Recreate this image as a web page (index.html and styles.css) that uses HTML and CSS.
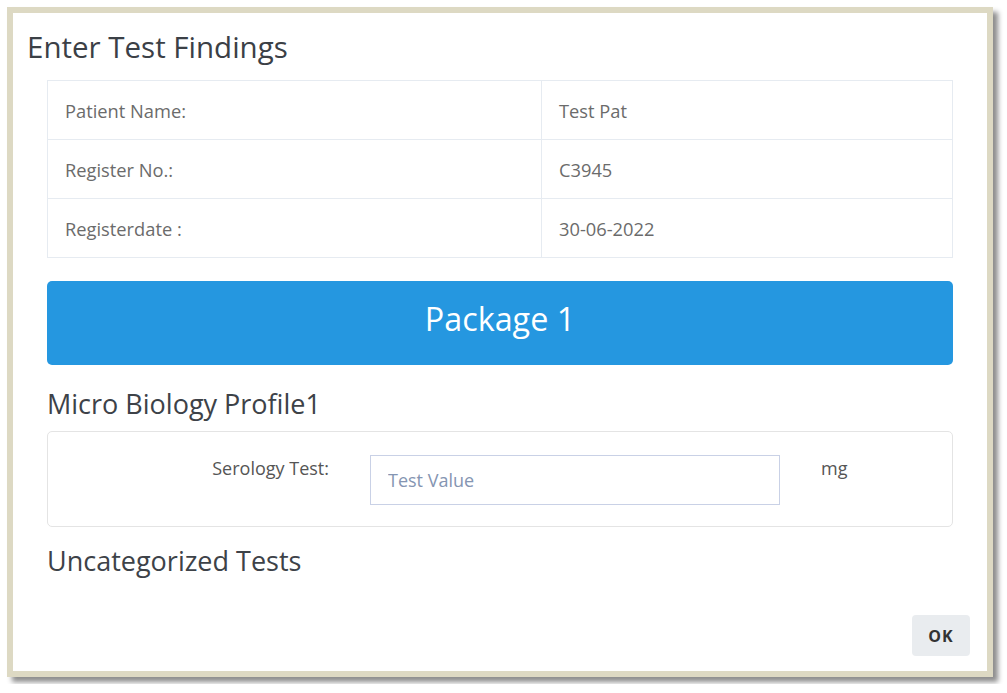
FILE: index.html
```html
<!DOCTYPE html>
<html lang="en">
<head>
  <meta charset="UTF-8">
  <meta name="viewport" content="width=device-width, initial-scale=1.0">
  <title>Enter Test Findings</title>
  <link rel="stylesheet" href="styles.css">
</head>

<body>
  <div class="modal">
    <h2 class="modal-title">Enter Test Findings</h2>

    <div class="modal-body">
      <table class="patient">
        <colgroup>
          <col class="col-key">
          <col>
        </colgroup>
        <tbody>
          <tr>
            <td>Patient Name:</td>
            <td>Test Pat</td>
          </tr>
          <tr>
            <td>Register No.:</td>
            <td>C3945</td>
          </tr>
          <tr>
            <td>Registerdate :</td>
            <td>30-06-2022</td>
          </tr>
        </tbody>
      </table>

      <div class="package">Package 1</div>

      <h3 class="section">Micro Biology Profile1</h3>
      <div class="card">
        <div class="test-row">
          <label class="test-label" for="serology">Serology Test:</label>
          <input class="test-input" id="serology" type="text" placeholder="Test Value">
          <span class="test-unit">mg</span>
        </div>
      </div>

      <h3 class="section section-last">Uncategorized Tests</h3>
    </div>

    <div class="modal-footer">
      <button class="btn-ok">OK</button>
    </div>
  </div>
</body>
</html>
```

FILE: styles.css
```css
body {
  margin: 0;
  padding: 0;
  background: #fff;
  font-family: "Open Sans", "Noto Sans", sans-serif;
  color: #444;
}
.modal {
  box-sizing: border-box;
  width: 986px;
  height: 670px;
  margin: 7px;
  border: 6px solid #ddd9c3;
  background: #fff;
  box-shadow: 5px 5px 5px rgba(0, 0, 0, 0.45);
  display: flex;
  flex-direction: column;
}
.modal-title {
  margin: 16px 0 0 14px;
  font-size: 29.5px;
  line-height: 36px;
  font-weight: 400;
  color: #3b4046;
}
.modal-body {
  padding: 0 34px;
  flex: 1;
}
/* patient info */
.patient {
  width: 100%;
  margin-top: 15px;
  border-collapse: collapse;
  table-layout: fixed;
}
.col-key {
  width: 494px;
}
.patient td {
  height: 59px;
  box-sizing: border-box;
  padding: 0 17px;
  border: 1px solid #e6ebf1;
  font-size: 18.3px;
  color: #6b6b6b;
}
.package {
  margin-top: 23px;
  height: 84px;
  box-sizing: border-box;
  padding-bottom: 10px;
  border-radius: 5px;
  background: #2597e0;
  color: #fff;
  font-size: 32.3px;
  line-height: 74px;
  text-align: center;
}
.section {
  margin: 23px 0 0;
  font-size: 27px;
  line-height: 32px;
  font-weight: 400;
  color: #3d4248;
}
.card {
  margin-top: 11px;
  border: 1px solid #e4e4e4;
  border-radius: 5px;
  padding: 23px 0 21px;
}
.test-row {
  display: grid;
  grid-template-columns: 281px 410px auto;
  column-gap: 41px;
  align-items: start;
}
.test-label {
  text-align: right;
  font-size: 18px;
  line-height: 24px;
  padding-top: 1px;
  color: #555;
}
.test-input {
  box-sizing: border-box;
  height: 50px;
  padding: 0 17px;
  border: 1px solid #c9d1e6;
  border-radius: 0;
  font-family: inherit;
  font-size: 18px;
  color: #333;
  outline: none;
}
.test-input::placeholder {
  color: #8595b2;
}
.test-unit {
  font-size: 18px;
  line-height: 24px;
  padding-top: 1px;
  color: #555;
}
.section-last {
  margin-top: 18px;
}
.modal-footer {
  display: flex;
  justify-content: flex-end;
  padding: 0 17px 15px;
}
.btn-ok {
  width: 58px;
  height: 41px;
  border: 0;
  border-radius: 4px;
  background: #e9ecef;
  font-family: inherit;
  font-size: 16px;
  font-weight: 700;
  letter-spacing: 1px;
  color: #333;
}
```
